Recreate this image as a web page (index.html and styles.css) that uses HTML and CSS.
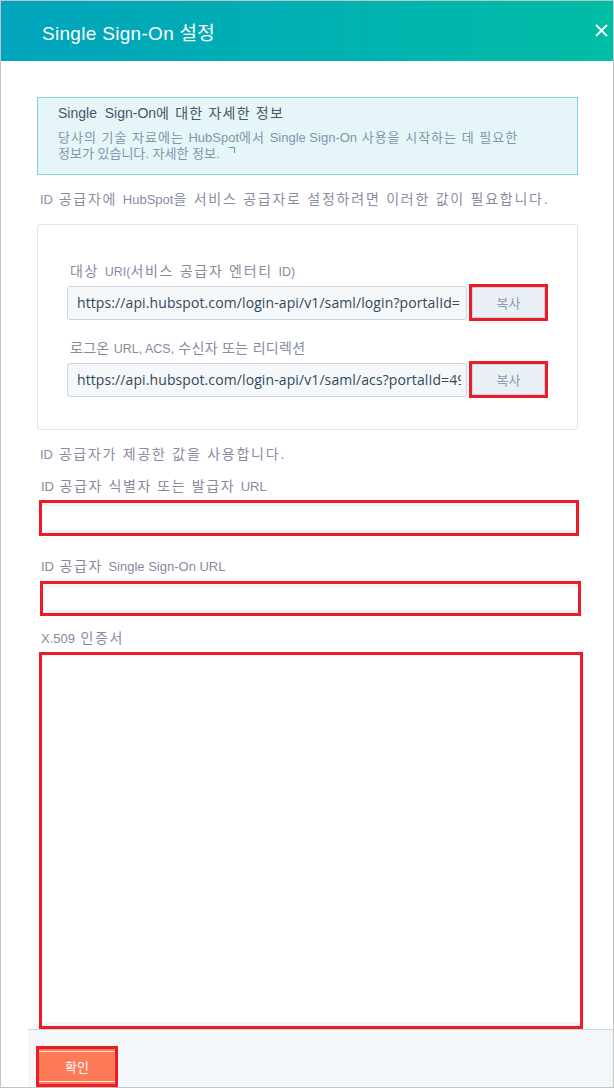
FILE: index.html
```html
<!DOCTYPE html>
<html lang="ko">
<head>
<meta charset="utf-8">
<title>Single Sign-On 설정</title>
<link rel="stylesheet" href="styles.css">
</head>
<body>
<div class="frame">
  <header class="header">
    <h1 class="title">Single Sign-On 설정</h1>
    <button class="close" aria-label="닫기">
      <svg width="13" height="13" viewBox="0 0 13 13"><path d="M1 1 L12 12 M12 1 L1 12" stroke="#fff" stroke-width="1.8" fill="none"/></svg>
    </button>
  </header>

  <main class="content">
    <section class="info">
      <div class="info-title"><span class="en">Single&nbsp; Sign-On</span>에 대한 자세한 정보</div>
      <p class="info-text">당사의 기술 자료에는 <span class="en">HubSpot</span>에서 <span class="en">Single Sign-On</span> 사용을 시작하는 데 필요한<br><span class="tight">정보가 있습니다. 자세한 정보.</span> <svg class="ext" width="8" height="8" viewBox="0 0 8 8"><path d="M1 1.5 H6.5 V7" stroke="#5aa9c9" stroke-width="1.2" fill="none"/></svg></p>
    </section>

    <p class="intro"><span class="en">ID</span> 공급자에 <span class="en">HubSpot</span>을 서비스 공급자로 설정하려면 이러한 값이 필요합니다.</p>

    <section class="card">
      <div class="field">
        <label class="label inset wide">대상 <span class="en">URI(</span>서비스 공급자 엔터티 <span class="en">ID)</span></label>
        <div class="copy-row">
          <div class="url"><span class="url-text">https://api.hubspot.com/login-api/v1/saml/login?portalId=</span></div>
          <button class="copy">복사</button>
        </div>
      </div>
      <div class="field second">
        <label class="label inset narrow">로그온 <span class="en">URL, ACS,</span> 수신자 또는 리디렉션</label>
        <div class="copy-row">
          <div class="url"><span class="url-text">https://api.hubspot.com/login-api/v1/saml/acs?portalId=49</span></div>
          <button class="copy">복사</button>
        </div>
      </div>
    </section>

    <p class="intro provided"><span class="en">ID</span> 공급자가 제공한 값을 사용합니다.</p>

    <label class="label plain l1"><span class="en">ID</span> 공급자 식별자 또는 발급자 <span class="en">URL</span></label>
    <div class="text-input in1"></div>

    <label class="label plain l2"><span class="en">ID</span> 공급자 <span class="en">Single Sign-On URL</span></label>
    <div class="text-input in2"></div>

    <label class="label plain l3"><span class="en">X.509</span> 인증서</label>
    <div class="textarea"></div>
  </main>

  <footer class="footer">
    <button class="ok">확인</button>
  </footer>
</div>
</body>
</html>
```

FILE: styles.css
```css
* { box-sizing: border-box; }
html, body { margin: 0; padding: 0; background: #fff; }
body { font-family: "Liberation Sans", "Noto Sans CJK KR", sans-serif; }

.frame {
  width: 614px;
  height: 1088px;
  border: 1px solid #c4c4c4;
  display: flex;
  flex-direction: column;
  overflow: hidden;
  background: #fff;
}

.en { letter-spacing: 0; font-size: 13px; }
.tight { letter-spacing: 0; }

.header {
  height: 60px;
  flex: none;
  display: flex;
  align-items: center;
  justify-content: space-between;
  padding: 0 4px 0 41px;
  background: linear-gradient(90deg, #00a4bc 0%, #00b0b2 50%, #00bda5 100%);
}
.title {
  margin: 0;
  color: #fff;
  font-size: 19px;
  font-weight: normal;
  letter-spacing: 0.3px;
}
.close {
  border: 0;
  background: none;
  padding: 0;
  width: 16px;
  height: 16px;
  display: flex;
  align-items: center;
  justify-content: center;
  margin-top: -2px;
}

.content {
  flex: 1;
  display: flex;
  flex-direction: column;
  padding: 36px 35px 0 36px;
}

.info {
  height: 78px;
  flex: none;
  background: #e5f5f8;
  border: 1px solid #7fd1de;
  padding: 6px 20px 0 20px;
}
.info-title {
  height: 18px;
  font-size: 14px;
  line-height: 18px;
  color: #4b5468;
  letter-spacing: 1.2px;
}
.info-title .en { font-size: 14px; }
.info-text {
  margin: 8px 0 0;
  height: 32px;
  font-size: 13px;
  line-height: 16px;
  color: #7f97ae;
  letter-spacing: 1px;
}
.ext { margin-left: 4px; vertical-align: 4px; }

.intro {
  margin: 14px 0 0 3px;
  height: 20px;
  flex: none;
  font-size: 14px;
  line-height: 20px;
  color: #8a8ca4;
  letter-spacing: 1.75px;
  white-space: nowrap;
}

.card {
  margin-top: 15px;
  height: 206px;
  flex: none;
  border: 1px solid #dfe3eb;
  border-radius: 3px;
  padding: 37px 29px 0 29px;
}
.field { display: flex; flex-direction: column; }
.field.second { margin-top: 19px; }

.label {
  display: block;
  flex: none;
  height: 18px;
  font-size: 14px;
  line-height: 18px;
  color: #868a9e;
  white-space: nowrap;
}
.label.inset { padding-left: 3px; margin-bottom: 4px; letter-spacing: 1.05px; }
.label.inset .en { font-size: 12.5px; }
.label.inset.wide { letter-spacing: 1.7px; }
.label.inset.narrow { letter-spacing: 0.3px; }

.copy-row {
  display: flex;
  align-items: flex-end;
  height: 36px;
}
.url {
  flex: 1;
  min-width: 0;
  height: 34px;
  margin-right: 2px;
  background: #f5f8fa;
  border: 1px solid #cbd6e2;
  border-radius: 3px;
  padding: 0 5px 0 9px;
  font-family: "Open Sans", "Liberation Sans", sans-serif;
  font-size: 14px;
  line-height: 32px;
  letter-spacing: 0.1px;
  color: #33475b;
  white-space: nowrap;
}
.url-text {
  display: block;
  overflow: hidden;
}
.copy {
  flex: none;
  width: 79px;
  height: 37px;
  margin-bottom: -1px;
  border: 3px solid #ed1c24;
  background: #eaf0f6;
  box-shadow: inset 0 0 0 1px #cbd6e2;
  font-family: "Noto Sans CJK KR", sans-serif;
  font-size: 13px;
  color: #8a9ab0;
  padding: 0;
}

.provided { margin-top: 14px; }

.label.plain { padding-left: 4px; letter-spacing: 1.6px; }
.l1 { margin-top: 13px; }
.l2 { margin-top: 21px; }
.l3 { margin-top: 13px; }

.text-input {
  flex: none;
  height: 36px;
  border: 3px solid #ed1c24;
  background: #fff;
  box-shadow: inset 0 4px 0 #f3f6f9, inset 0 -3px 0 #f3f6f9;
}
.in1 { margin: 5px 0 0 2px; width: 540px; }
.in2 { margin: 6px 0 0 3px; width: 541px; height: 35px; }

.textarea {
  flex: none;
  margin: 5px 0 0 2px;
  width: 544px;
  height: 377px;
  border: 3px solid #ed1c24;
  background: #fff;
  box-shadow: inset 0 -4px 0 #f3f6f9;
}

.footer {
  flex: none;
  height: 59px;
  margin-left: 27px;
  background: #f4f7fa;
  border-top: 1px solid #cbd6e2;
  padding: 16px 0 0 8px;
}
.ok {
  width: 82px;
  height: 41px;
  border: 3px solid #ed1c24;
  background: #ff7b58;
  box-shadow: inset 0 2px 0 #ff7b58, inset 0 3px 0 #fde3da, inset 0 -2px 0 #ff7b58, inset 0 -3px 0 #fde3da;
  color: #fff;
  font-family: "Noto Sans CJK KR", sans-serif;
  font-size: 13px;
  padding: 0;
}
```
